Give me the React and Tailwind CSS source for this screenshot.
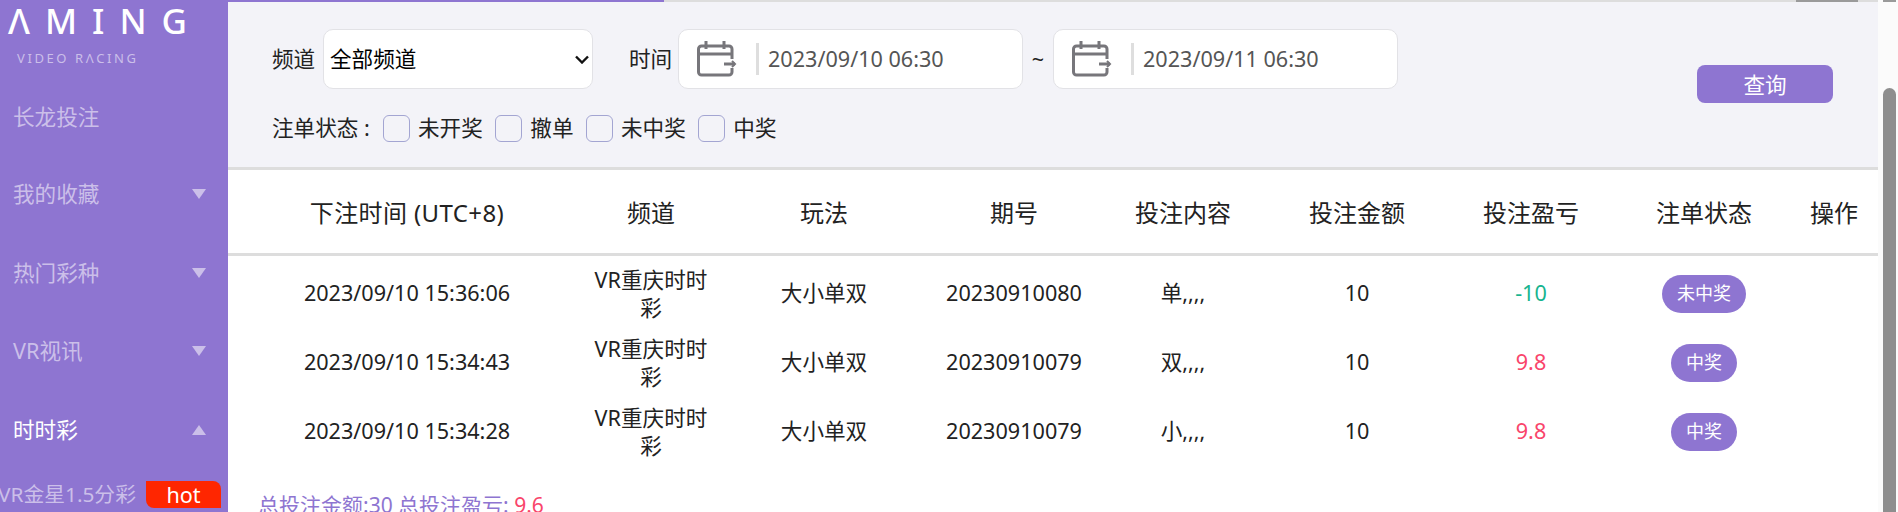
const menu = [
  { label: "我的收藏", arrow: "down" },
  { label: "热门彩种", arrow: "down" },
  { label: "VR视讯", arrow: "down" },
  { label: "时时彩", arrow: "up", active: true },
];

const columns = ["下注时间 (UTC+8)", "频道", "玩法", "期号", "投注内容", "投注金额", "投注盈亏", "注单状态", "操作"];

const rows = [
  { time: "2023/09/10 15:36:06", issue: "20230910080", content: "单,,,,", profit: "-10", status: "未中奖", lost: true },
  { time: "2023/09/10 15:34:43", issue: "20230910079", content: "双,,,,", profit: "9.8", status: "中奖" },
  { time: "2023/09/10 15:34:28", issue: "20230910079", content: "小,,,,", profit: "9.8", status: "中奖" },
];

const statuses = ["未开奖", "撤单", "未中奖", "中奖"];

const gridCols = "grid grid-cols-[358px_130px_216px_164px_174px_174px_174px_172px_88px] items-center text-center";

function Triangle({ up }) {
  return (
    <svg width="14" height="10" viewBox="0 0 14 10" className="shrink-0">
      <path d={up ? "M7 0L14 10H0Z" : "M0 0H14L7 10Z"} fill="#cbbfe9" />
    </svg>
  );
}

function CalendarIcon() {
  return (
    <svg width="40" height="36" viewBox="0 0 40 36" fill="none" stroke="#77767b" strokeWidth="3" className="shrink-0">
      <path d="M35 18V8a3 3 0 0 0-3-3H4.500a3 3 0 0 0-3 3V31a3 3 0 0 0 3 3H32a3 3 0 0 0 3-3v-4" />
      <path d="M1.500 13H35" />
      <path d="M9 0v8M27 0v8" />
      <path d="M27 23H38" />
      <path d="M35 20l3 3-3 3" strokeWidth="2" />
    </svg>
  );
}

function DateBox({ value, className }) {
  return (
    <div className={`flex h-[60px] items-center rounded-[10px] border border-[#e2e2e6] bg-white pl-[18px] ${className}`}>
      <CalendarIcon />
      <span className="ml-[19px] h-[32px] w-[3px] bg-[#dedede]" />
      <span className="ml-[9px] text-[#555]">{value}</span>
    </div>
  );
}

export default function App() {
  return (
    <div className="flex h-[512px] w-[1898px] overflow-hidden bg-white font-['Noto_Sans','Noto_Sans_CJK_SC',sans-serif] text-[21.6px] text-[#222]">
      <aside className="flex w-[228px] shrink-0 flex-col bg-[#8e75d1] text-[#cbbfe9]">
        <div className="h-[81px] pl-[8px] pt-[1px]">
          <div className="whitespace-nowrap text-[35px] font-medium leading-[40px] tracking-[15px] text-white">ΛMING</div>
          <div className="mt-[9px] whitespace-nowrap pl-[9px] text-[13px] leading-[16px] tracking-[2.600px] text-[#cbbfe9]">VIDEO RΛCING</div>
        </div>
        <div className="flex h-[73px] items-center pl-[13px]">长龙投注</div>
        <div className="pt-px">
          {menu.map((item) => (
            <div
              key={item.label}
              className={`flex h-[78.500px] items-center justify-between pl-[13px] pr-[22px] ${item.active ? "text-white" : ""}`}
            >
              <span>{item.label}</span>
              <Triangle up={item.arrow === "up"} />
            </div>
          ))}
        </div>
        <div className="mt-[10px] flex items-center">
          <span className="ml-[-2px] w-[148px] whitespace-nowrap text-[20.8px]">VR金星1.5分彩</span>
          <span className="h-[27px] w-[75px] rounded-tr-lg rounded-bl-lg bg-[#ff2600] text-center leading-[27px] text-white">hot</span>
        </div>
      </aside>

      <main className="flex w-[1650px] shrink-0 flex-col">
        <div className="flex h-[1.500px] shrink-0 bg-[#dddddd]">
          <div className="w-[436px] bg-[#8e75d1]" />
          <div className="ml-[1132px] w-[62px] bg-[#9a9a9a]" />
        </div>
        <section className="flex h-[168.500px] shrink-0 justify-between border-b-[3px] border-[#dddddd] bg-[#f3f3f8] pl-[44px] pr-[45px]">
          <div className="pt-[27.500px]">
            <div className="flex items-center">
              <span className="w-[51px]">频道</span>
              <div className="relative">
                <select className="block h-[60px] w-[270px] appearance-none rounded-[10px] border border-[#e2e2e6] bg-white pl-[6px] text-black">
                  <option>全部频道</option>
                </select>
                <svg width="14" height="9" viewBox="0 0 14 9" fill="none" stroke="#111" strokeWidth="2.400" className="pointer-events-none absolute right-[4px] top-[26px]">
                  <path d="M1 1.500l6 6 6-6" />
                </svg>
              </div>
              <span className="ml-[36px] w-[49px]">时间</span>
              <DateBox value="2023/09/10 06:30" className="w-[345px]" />
              <span className="w-[30px] text-center">~</span>
              <DateBox value="2023/09/11 06:30" className="w-[345px]" />
            </div>
            <div className="mt-[23px] flex items-center">
              <span className="w-[111px] whitespace-pre">注单状态 :</span>
              {statuses.map((status) => (
                <label key={status} className="mr-[12.500px] flex items-center">
                  <span className="h-[27px] w-[27px] rounded-[6px] border-[1.500px] border-[#a3a5d2]" />
                  <span className="ml-[8px]">{status}</span>
                </label>
              ))}
            </div>
          </div>
          <button className="mt-[63.500px] h-[38px] w-[136px] rounded-[8px] bg-[#8e75d1] pt-[2px] text-white">查询</button>
        </section>

        <div className={`${gridCols} h-[83px] shrink-0 pt-[2px] text-[24px]`}>
          {columns.map((col, i) => (
            <div key={col} className={i === 0 ? "tracking-[0.400px]" : ""}>{col}</div>
          ))}
        </div>
        <div className="h-[3px] shrink-0 bg-[#dddddd]" />

        <div className="pt-[3px]">
          {rows.map((row) => (
            <div key={row.time} className={`${gridCols} h-[69px]`}>
              <div>{row.time}</div>
              <div className="mx-auto w-[114px] leading-[28px]">VR重庆时时彩</div>
              <div>大小单双</div>
              <div>{row.issue}</div>
              <div>{row.content}</div>
              <div>10</div>
              <div className={row.lost ? "text-[#17b48f]" : "text-[#f9456b]"}>{row.profit}</div>
              <div>
                <span className="inline-block h-[38px] rounded-full bg-[#8e75d1] px-[15px] text-[18px] leading-[36px] text-white">{row.status}</span>
              </div>
              <div />
            </div>
          ))}
        </div>
        <div className="mt-[24px] pl-[30px] text-[21px] leading-[30px] text-[#8e75d1]">
          总投注金额:30 总投注盈亏: <span className="text-[#f9456b]">9.6</span>
        </div>
      </main>

      <div className="flex flex-1 flex-col bg-[#fbfbfb] pl-[5px]">
        <div className="h-[2px] w-[13px] bg-[#9a9a9a]" />
        <div className="mt-[86px] w-[13px] flex-1 rounded-t-full bg-[#8e8e8e]" />
      </div>
    </div>
  );
}
